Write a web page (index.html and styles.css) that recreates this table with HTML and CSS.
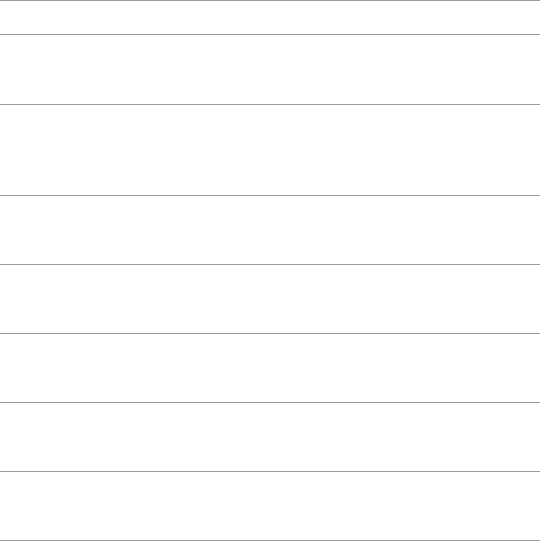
FILE: index.html
```html
<!DOCTYPE html>
<html lang="en">
<head>
<meta charset="utf-8">
<title>Rows</title>
<link rel="stylesheet" href="styles.css">
</head>
<body>
<div class="table">
  <div class="row row-head"></div>
  <div class="row row-a"></div>
  <div class="row row-b"></div>
  <div class="row row-c"></div>
  <div class="row row-c"></div>
  <div class="row row-c"></div>
  <div class="row row-c"></div>
  <div class="row row-c row-last"></div>
</div>
</body>
</html>
```

FILE: styles.css
```css
html, body {
  margin: 0;
  padding: 0;
  background: #ffffff;
  font-family: "Liberation Sans", Arial, sans-serif;
}
.table {
  display: flex;
  flex-direction: column;
  width: 540px;
}
.row {
  border-top: 1px solid #9c9c9c;
  box-sizing: content-box;
}
.row-head { height: 33px; }
.row-a { height: 69px; }
.row-b { height: 90px; }
.row-c { height: 68px; }
.row-last { border-bottom: 1px solid #9c9c9c; }
```
